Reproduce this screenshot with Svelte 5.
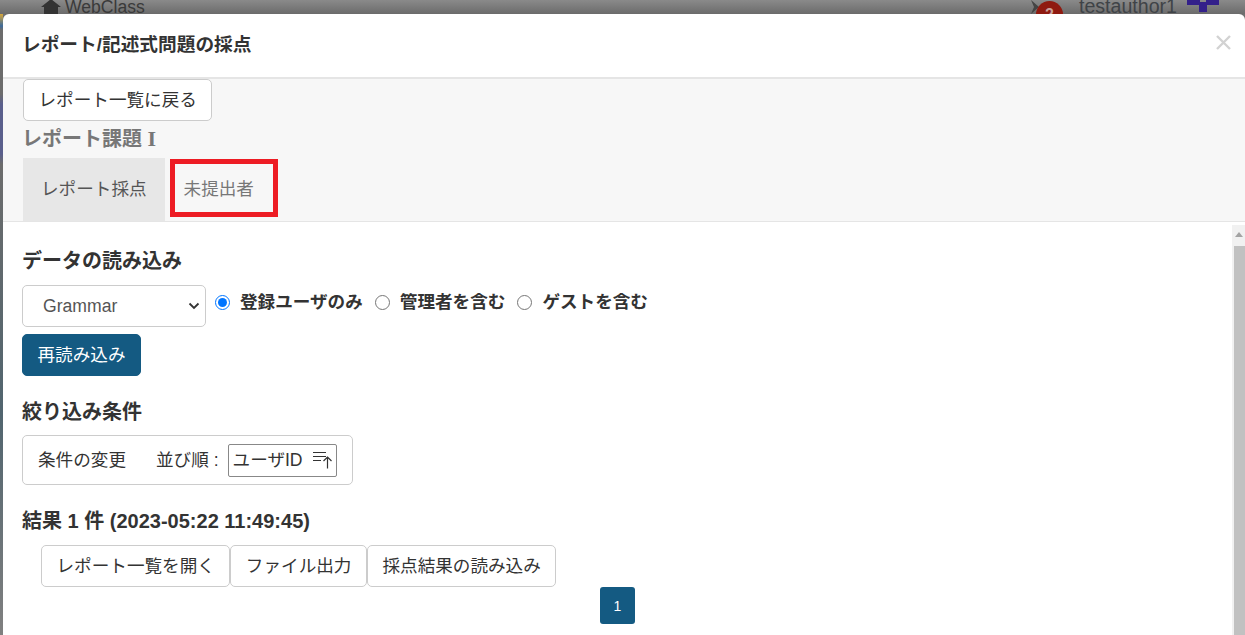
<script lang="ts">
  let scope = $state('user');
  const scopes = [
    { id: 'user', label: '登録ユーザのみ' },
    { id: 'admin', label: '管理者を含む' },
    { id: 'guest', label: 'ゲストを含む' }
  ];
  const actions = ['レポート一覧を開く', 'ファイル出力', '採点結果の読み込み'];
</script>

<div class="page">
  <div class="topbar">
    <div class="brand">
      <svg class="home" viewBox="0 0 20 16" width="20" height="16"><path d="M10 0 0 8h3v8h14V8h3z" fill="#333" /></svg>
      <span>WebClass</span>
    </div>
    <div class="account">
      <svg class="chev" viewBox="0 0 12 14" width="12" height="14"><path d="M1 0l8 7-8 7 3-7z" fill="#444" /></svg>
      <span class="badge">2</span>
      <span class="username">testauthor1</span>
      <svg class="avatar" viewBox="0 0 32 12" width="32" height="12"><path d="M0 0h13v2h6V0h13v5H20v7h-8V5H0z" fill="#33208a" /></svg>
    </div>
  </div>

  <div class="frame">
    <div class="desktop-edge"></div>
    <div class="modal">
      <header class="modal-head">
        <h1>レポート/記述式問題の採点</h1>
        <button class="close" aria-label="閉じる">
          <svg viewBox="0 0 15 15" width="15" height="15"><path d="M1 1l13 13M14 1 1 14" fill="none" stroke="#d2d2d2" stroke-width="2.400" /></svg>
        </button>
      </header>

      <section class="sub">
        <button class="btn back">レポート一覧に戻る</button>
        <h2 class="report-title">レポート課題 <span class="numeral">I</span></h2>
        <nav class="tabs">
          <a class="tab active" href="#a">レポート採点</a>
          <a class="tab" href="#b">未提出者</a>
          <span class="callout"></span>
        </nav>
      </section>

      <div class="body">
        <div class="content">
          <h3 class="first">データの読み込み</h3>
          <div class="load-row">
            <div class="select">
              <span>Grammar</span>
              <svg viewBox="0 0 12 8" width="12" height="8"><path d="M1.5 1.500 6 6l4.500-4.500" fill="none" stroke="#333" stroke-width="1.800" /></svg>
            </div>
            {#each scopes as s}
              <label class="radio">
                <input type="radio" name="scope" value={s.id} bind:group={scope} />
                <span>{s.label}</span>
              </label>
            {/each}
          </div>
          <button class="btn primary">再読み込み</button>

          <h3 class="filter">絞り込み条件</h3>
          <div class="filter-box">
            <span class="cond">条件の変更</span>
            <span class="order">並び順 :</span>
            <div class="sort">
              <span>ユーザID</span>
              <svg viewBox="0 0 20 18" width="20" height="18">
                <path d="M0 1.500h13M0 5.500h13M0 9.500h8M14.500 17.500V6M10.500 10l4-4 4 4" fill="none" stroke="#333" stroke-width="1.200" />
              </svg>
            </div>
          </div>

          <h3 class="result">結果 1 件 (2023-05:22 11:49:45)</h3>
          <div class="actions">
            {#each actions as a}
              <button class="btn">{a}</button>
            {/each}
          </div>
          <div class="pager"><span class="page-no">1</span></div>
        </div>
        <div class="scrollbar">
          <div class="arrow"></div>
          <div class="thumb"></div>
        </div>
      </div>
    </div>
  </div>
</div>

<style>
  :global(body) {
    margin: 0;
    font-family: "Liberation Sans", "Noto Sans CJK JP", sans-serif;
    color: #333;
  }

  .page {
    width: 1245px;
    height: 635px;
    overflow: hidden;
    background: #6f6f6f;
    display: flex;
    flex-direction: column;
  }

  .topbar {
    height: 14px;
    flex-shrink: 0;
    overflow: hidden;
    display: flex;
    justify-content: space-between;
    background: linear-gradient(#8a8a8a, #6b6b6b);
    color: #3a3a3a;
    font-size: 19.600px;
    line-height: 20px;
  }

  .brand {
    display: flex;
    gap: 4px;
    margin: -3px 0 0 41px;
    font-size: 17.600px;
  }

  .home {
    margin-top: 2px;
  }

  .account {
    display: flex;
    margin: -4px 26px 0 0;
  }

  .chev {
    margin: 4px -6px 0 0;
  }

  .badge {
    width: 27px;
    height: 27px;
    margin-top: 5px;
    border-radius: 50%;
    background: #8f1a10;
    color: #c9a09a;
    font-size: 16px;
    font-weight: bold;
    line-height: 27px;
    text-align: center;
  }

  .username {
    margin: 0 0 0 16px;
    color: #3f4347;
  }

  .avatar {
    margin: 4px 0 0 10px;
  }

  .frame {
    flex: 1;
    min-height: 0;
    display: flex;
  }

  .desktop-edge {
    width: 3px;
    background: linear-gradient(#d8a83a 0, #3d6a9a 12px, #6c6c6c 16px, #6c6c6c 80px, #5a5f8c 90px, #5a5f8c 140px, #6c6c6c 150px, #51656f 400px, #808080 100%);
  }

  .modal {
    flex: 1;
    min-width: 0;
    background: #fff;
    border-radius: 6px 6px 0 0;
    display: flex;
    flex-direction: column;
  }

  .modal-head {
    height: 65px;
    box-sizing: border-box;
    flex-shrink: 0;
    display: flex;
    align-items: center;
    justify-content: space-between;
    padding: 0 14px 6px 19px;
    border-bottom: 2px solid #e5e5e5;
  }

  h1 {
    margin: 0;
    font-size: 18.700px;
    font-weight: bold;
    color: #333;
  }

  .close {
    display: flex;
    padding: 0;
    border: none;
    background: none;
  }

  .sub {
    height: 143px;
    flex-shrink: 0;
    box-sizing: border-box;
    padding-left: 20px;
    background: #f7f7f7;
    border-bottom: 1px solid #e5e5e5;
  }

  .btn {
    height: 42px;
    padding: 0 14.500px 4px;
    box-sizing: border-box;
    background: #fff;
    border: 1px solid #ccc;
    border-radius: 5px;
    color: #333;
    font-family: inherit;
    font-size: 17.600px;
  }

  .back {
    display: block;
  }

  .report-title {
    margin: 5px 0 0 -1px;
    font-size: 20px;
    line-height: 26px;
    color: #777;
  }

  .numeral {
    font-family: "Liberation Serif", serif;
    font-size: 22px;
  }

  .tabs {
    position: relative;
    display: flex;
    margin-top: 6px;
  }

  .tab {
    height: 63px;
    box-sizing: border-box;
    padding: 0 18px 4px;
    display: flex;
    align-items: center;
    color: #777;
    font-size: 17.600px;
    text-decoration: none;
  }

  .tab.active {
    background: #e7e7e7;
    color: #555;
    margin-right: 1px;
  }

  .callout {
    position: absolute;
    left: 147px;
    top: 1px;
    width: 108px;
    height: 58px;
    box-sizing: border-box;
    border: 5px solid #ed1c24;
  }

  .body {
    flex: 1;
    min-height: 0;
    display: flex;
  }

  .content {
    flex: 1;
    padding-left: 19px;
  }

  h3 {
    margin: 0;
    font-size: 20px;
    line-height: 28px;
    color: #333;
  }

  h3.first {
    margin-top: 25px;
  }

  .load-row {
    display: flex;
    align-items: flex-start;
    margin-top: 10px;
  }

  .select {
    width: 184px;
    height: 42px;
    box-sizing: border-box;
    padding: 0 5px 0 20px;
    display: flex;
    align-items: center;
    justify-content: space-between;
    border: 1px solid #ccc;
    border-radius: 5px;
    color: #555;
    font-size: 17.600px;
    margin-right: 2px;
  }

  .radio {
    display: flex;
    align-items: center;
    height: 34px;
    font-size: 17.600px;
    font-weight: bold;
  }

  .radio span {
    margin-top: -3px;
  }

  .radio input {
    width: 15px;
    height: 15px;
    margin: 0 10px 0 7px;
    accent-color: #0075ff;
  }

  .radio + .radio input {
    margin-left: 12px;
  }

  .primary {
    display: block;
    margin-top: 7px;
    width: 119px;
    padding: 0 0 4px;
    background: #145a82;
    border-color: #145a82;
    color: #fff;
  }

  h3.filter {
    margin-top: 22px;
  }

  .filter-box {
    width: 331px;
    height: 50px;
    box-sizing: border-box;
    margin-top: 9px;
    padding-left: 15px;
    display: flex;
    align-items: center;
    border: 1px solid #ccc;
    border-radius: 5px;
    font-size: 17.600px;
  }

  .cond, .order {
    margin-top: -3px;
  }

  .order {
    margin-left: 30px;
    margin-right: 9px;
    white-space: nowrap;
  }

  .sort {
    width: 109px;
    height: 33px;
    flex-shrink: 0;
    box-sizing: border-box;
    padding: 0 3px 0 4px;
    display: flex;
    align-items: center;
    justify-content: space-between;
    border: 1px solid #888;
    border-radius: 2px;
  }

  .sort span {
    margin-top: -3px;
    white-space: nowrap;
  }

  h3.result {
    margin-top: 22px;
  }

  .actions {
    display: flex;
    margin: 10px 0 0 19px;
  }

  .pager {
    display: flex;
    justify-content: center;
    width: 1191px;
  }

  .page-no {
    width: 35px;
    height: 37px;
    display: flex;
    align-items: center;
    justify-content: center;
    background: #145a82;
    border-radius: 3px;
    color: #fff;
    font-size: 14px;
  }

  .scrollbar {
    width: 13px;
    margin-top: 3px;
    background: #f1f1f1;
    flex-shrink: 0;
  }

  .arrow {
    width: 0;
    height: 0;
    margin: 7px auto 0;
    border: 4px solid transparent;
    border-top: 0;
    border-bottom: 5px solid #a3a3a3;
  }

  .thumb {
    height: 400px;
    margin: 9px 0 0 2px;
    background: #c1c1c1;
  }
</style>
